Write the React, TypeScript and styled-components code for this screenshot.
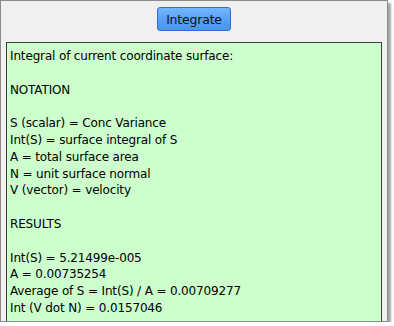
import React from "react";
import styled, { createGlobalStyle } from "styled-components";

const GlobalStyle = createGlobalStyle`
  html, body {
    margin: 0;
    padding: 0;
    background: #ffffff;
  }
  body {
    font-family: "DejaVu Sans", "Liberation Sans", sans-serif;
  }
`;

const lines = [
  "Integral of current coordinate surface:",
  "",
  "NOTATION",
  "",
  "S (scalar) = Conc Variance",
  "Int(S) = surface integral of S",
  "A = total surface area",
  "N = unit surface normal",
  "V (vector) = velocity",
  "",
  "RESULTS",
  "",
  "Int(S) = 5.21499e-005",
  "A = 0.00735254",
  "Average of S = Int(S) / A = 0.00709277",
  "Int (V dot N) = 0.0157046",
];

const App = () => {
  return (
    <>
      <GlobalStyle />
      <Panel>
        <IntegrateButton type="button">Integrate</IntegrateButton>
        <Output>
          {lines.map((line, i) => (
            <Line key={i}>{line || "\u00a0"}</Line>
          ))}
        </Output>
      </Panel>
    </>
  );
};

export default App;

const Panel = styled.div`
  box-sizing: border-box;
  width: 388px;
  height: 322px;
  background: #f0f0f0;
  border: 1px solid #8a8a8a;
  box-shadow: 3px 3px 2px rgba(0, 0, 0, 0.35);
  display: flex;
  flex-direction: column;
  align-items: center;
  overflow: hidden;
`;

const IntegrateButton = styled.button`
  box-sizing: border-box;
  flex-shrink: 0;
  margin-top: 6px;
  width: 74px;
  height: 24px;
  padding: 0;
  border: 1px solid #2e6fd6;
  border-radius: 3px;
  background: linear-gradient(#74b6ff, #5aa2f6 50%, #4b94ef);
  color: #111;
  font-family: "DejaVu Sans", "Liberation Sans", sans-serif;
  font-size: 12.5px;
  letter-spacing: -0.2px;
  cursor: pointer;
`;

const Output = styled.div`
  box-sizing: border-box;
  align-self: stretch;
  flex-shrink: 0;
  margin: 11px 5px 0 5px;
  padding: 5px 3px 8px 3px;
  background: #ccffcc;
  border: 1px solid #3c3c3c;
  color: #000;
  font-size: 12px;
  letter-spacing: -0.15px;
  line-height: 16.8px;
`;

const Line = styled.div`
  white-space: pre;
`;
